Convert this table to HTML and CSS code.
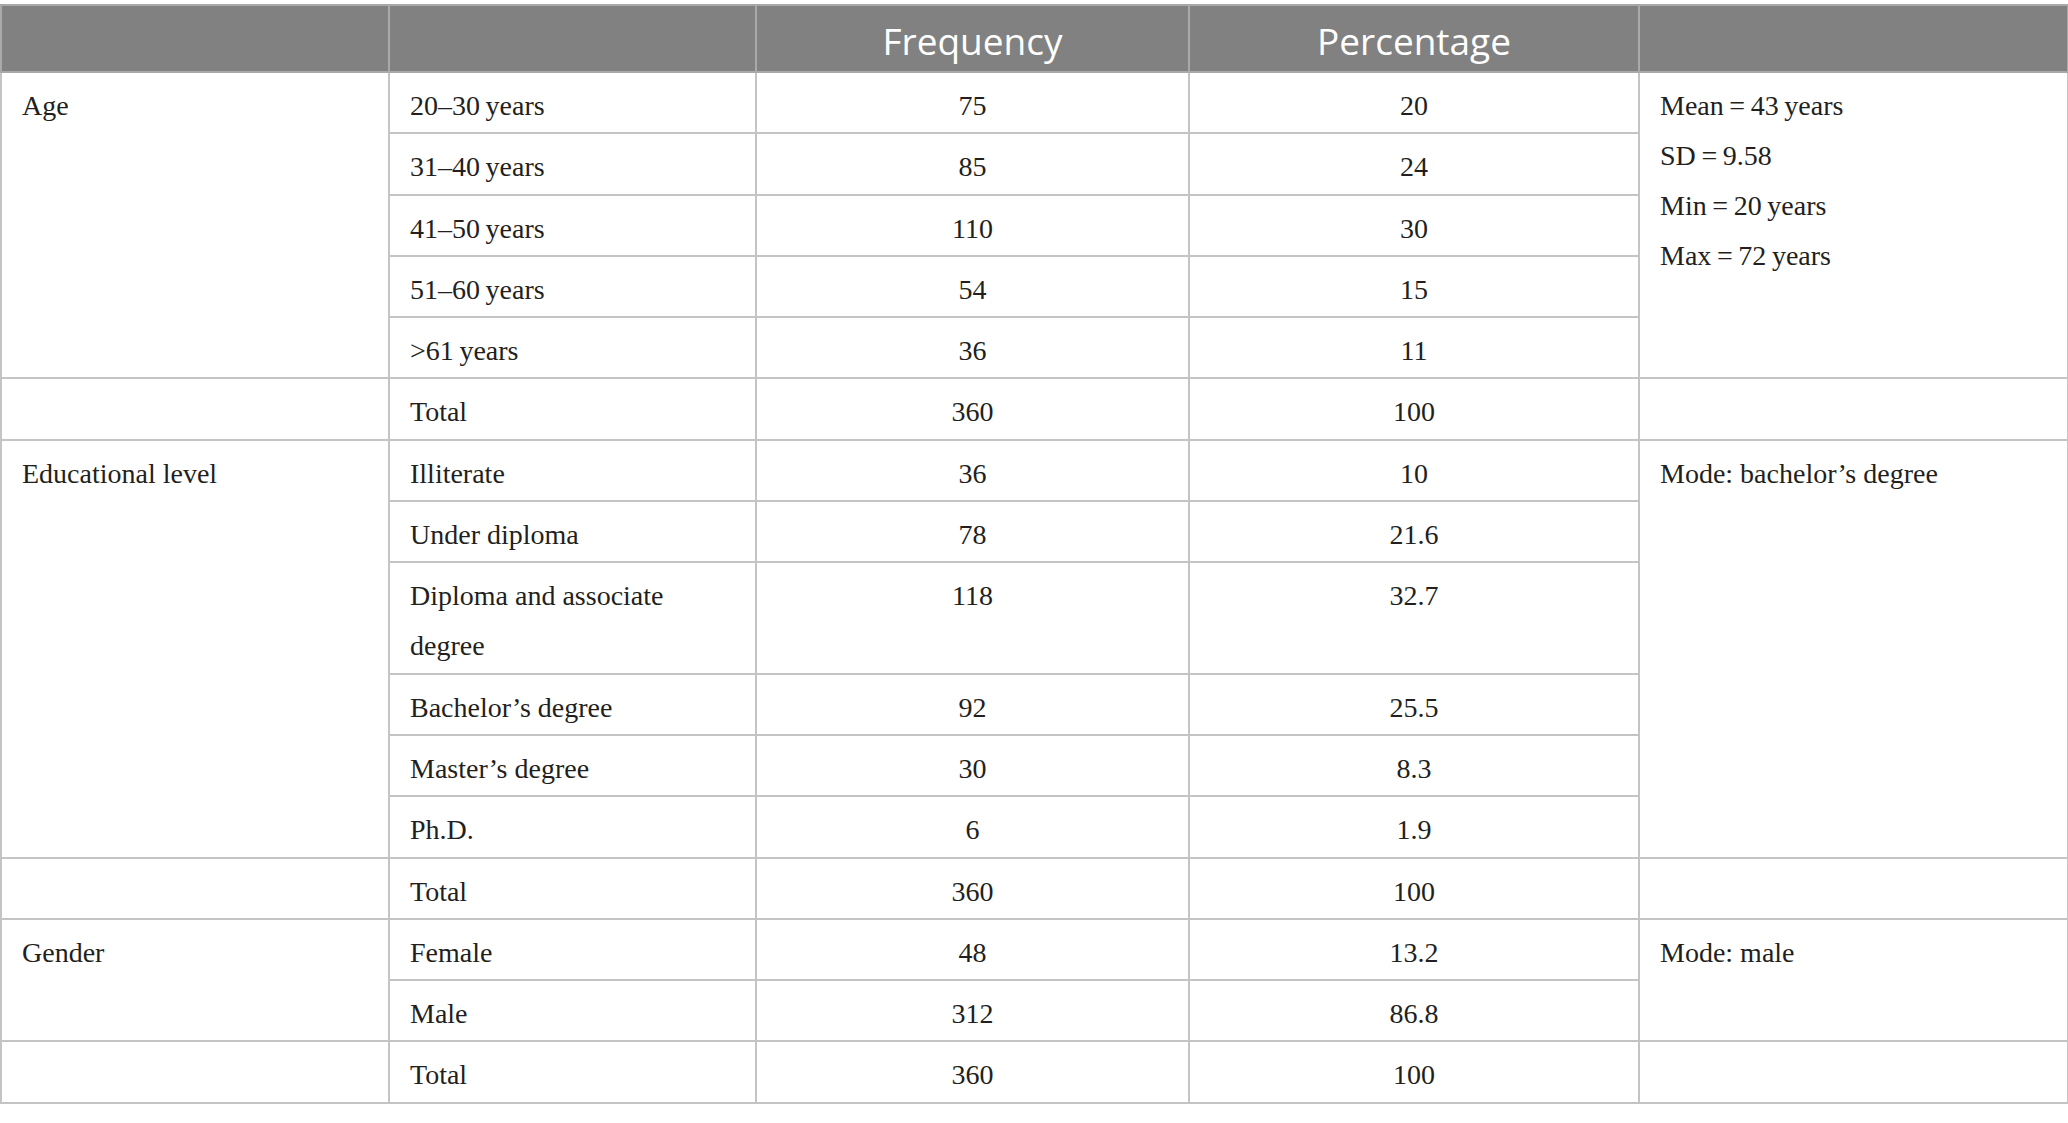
FILE: index.html
```html
<!DOCTYPE html>
<html lang="en">
<head>
<meta charset="utf-8">
<title>Table</title>
<link rel="stylesheet" href="styles.css">
</head>
<body>
<table class="data">
  <colgroup>
    <col class="c1"><col class="c2"><col class="c3"><col class="c4"><col class="c5">
  </colgroup>
  <thead>
    <tr><th></th><th></th><th>Frequency</th><th>Percentage</th><th></th></tr>
  </thead>
  <tbody>
    <tr><td rowspan="5">Age</td><td>20–30&thinsp;years</td><td class="num">75</td><td class="num">20</td>
      <td rowspan="5" class="stats">Mean&thinsp;=&thinsp;43&thinsp;years<br>SD&thinsp;=&thinsp;9.58<br>Min&thinsp;=&thinsp;20&thinsp;years<br>Max&thinsp;=&thinsp;72&thinsp;years</td></tr>
    <tr><td>31–40&thinsp;years</td><td class="num">85</td><td class="num">24</td></tr>
    <tr><td>41–50&thinsp;years</td><td class="num">110</td><td class="num">30</td></tr>
    <tr><td>51–60&thinsp;years</td><td class="num">54</td><td class="num">15</td></tr>
    <tr><td>&gt;61&thinsp;years</td><td class="num">36</td><td class="num">11</td></tr>
    <tr><td></td><td>Total</td><td class="num">360</td><td class="num">100</td><td></td></tr>
    <tr><td rowspan="6">Educational level</td><td>Illiterate</td><td class="num">36</td><td class="num">10</td>
      <td rowspan="6">Mode: bachelor’s degree</td></tr>
    <tr><td>Under diploma</td><td class="num">78</td><td class="num">21.6</td></tr>
    <tr><td>Diploma and associate<br>degree</td><td class="num">118</td><td class="num">32.7</td></tr>
    <tr><td>Bachelor’s degree</td><td class="num">92</td><td class="num">25.5</td></tr>
    <tr><td>Master’s degree</td><td class="num">30</td><td class="num">8.3</td></tr>
    <tr><td>Ph.D.</td><td class="num">6</td><td class="num">1.9</td></tr>
    <tr><td></td><td>Total</td><td class="num">360</td><td class="num">100</td><td></td></tr>
    <tr><td rowspan="2">Gender</td><td>Female</td><td class="num">48</td><td class="num">13.2</td>
      <td rowspan="2">Mode: male</td></tr>
    <tr><td>Male</td><td class="num">312</td><td class="num">86.8</td></tr>
    <tr><td></td><td>Total</td><td class="num">360</td><td class="num">100</td><td></td></tr>
  </tbody>
</table>
</body>
</html>
```

FILE: styles.css
```css
html, body {
  margin: 0;
  padding: 0;
  background: #ffffff;
}
body {
  padding-top: 4px;
}
.data {
  border-collapse: collapse;
  table-layout: fixed;
  width: 2067px;
  font-family: "Liberation Serif", "Times New Roman", serif;
  font-size: 28px;
  line-height: 50px;
  color: #231f20;
}
.c1 { width: 388px; }
.c2 { width: 367px; }
.c3 { width: 433px; }
.c4 { width: 450px; }
.c5 { width: 429px; }
.data th,
.data td {
  border: 2px solid #c4c4c4;
}
.data th {
  background: #808180;
  color: #ffffff;
  font-family: "Open Sans", "Noto Sans", sans-serif;
  font-weight: 400;
  font-size: 37px;
  line-height: 40px;
  height: 67px;
  padding: 5px 20px 0 20px;
  box-sizing: border-box;
  text-align: center;
  vertical-align: middle;
  border-color: #a9a9a9;
}
.data td {
  padding: 8px 20px 1.3px 20px;
  vertical-align: top;
  text-align: left;
}
.data td.num {
  text-align: center;
}
```
